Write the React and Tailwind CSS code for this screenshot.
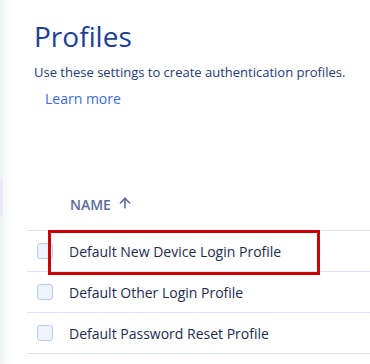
import {ArrowUp} from "lucide-react";

const rows = [
    {name: "Default New Device Login Profile", marked: true},
    {name: "Default Other Login Profile"},
    {name: "Default Password Reset Profile"},
];

const App = () => {
    return (
        <div className="flex h-[364px] w-[370px] overflow-hidden bg-white font-['Open_Sans',sans-serif]">
            <div className="relative w-[3px] shrink-0 bg-[#f1f2f4]">
                <div className="absolute left-0 top-[180px] h-[36px] w-[3px] bg-[#e4ebf9]" />
            </div>
            <div className="w-[10px] shrink-0 bg-gradient-to-r from-[#f6f7f8] to-white" />
            <div className="flex-1 min-w-0">
                <h1 className="ml-[21px] mt-[16px] text-[28px] leading-[40px] text-[#1c3f94]">Profiles</h1>
                <p className="ml-[21px] mt-[7px] text-[13px] leading-[18px] text-[#243a73]">
                    Use these settings to create authentication profiles.
                </p>
                <a className="ml-[32px] mt-[8px] block text-[14px] font-medium leading-[20px] text-[#3b6de0]">
                    Learn more
                </a>

                <div className="ml-[14px] mt-[85px]">
                    <div className="flex h-[36px] items-start pl-[43px] text-[14px] font-semibold uppercase text-[#5a6d96]">
                        <span>Name</span>
                        <ArrowUp size={16} strokeWidth={2.4} className="ml-[6px] mt-[1px]" />
                    </div>
                    <div className="border-t border-[#dbe5f7]">
                        {rows.map((row) => (
                            <div key={row.name} className="relative flex h-[41px] items-center border-b border-[#dbe5f7] pl-[10px]">
                                <span className="h-[16px] w-[16px] rounded-[3px] border border-[#b6cbf1] bg-[#eff3fc]" />
                                <span className="ml-[16px] text-[14px] text-[#1d2c50]">{row.name}</span>
                                {row.marked && (
                                    <div className="absolute left-[21px] top-[-1px] h-[45px] w-[272px] border-[3px] border-[#cc0000]" />
                                )}
                            </div>
                        ))}
                    </div>
                </div>
            </div>
        </div>
    );
};

export default App;
